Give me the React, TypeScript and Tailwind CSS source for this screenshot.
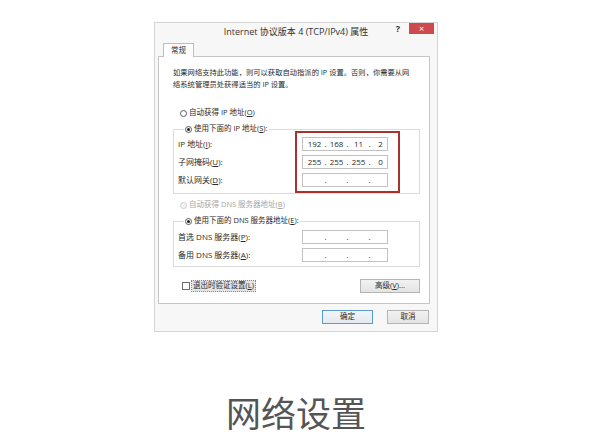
import type { ReactNode } from "react";

const UI = "font-['Open_Sans','Noto_Sans_CJK_SC',sans-serif]";

function Radio({ checked = false, disabled = false }: { checked?: boolean; disabled?: boolean }) {
  return (
    <span
      className={`flex h-[7px] w-[7px] shrink-0 items-center justify-center rounded-full border ${
        disabled ? "border-[#cfcfcf] bg-[#f2f2f2]" : "border-[#5a5a5a] bg-white"
      }`}
    >
      {checked && <span className="h-[3px] w-[3px] rounded-full bg-[#1e1e1e]" />}
    </span>
  );
}

function IpBox({ parts = ["", "", "", ""] }: { parts?: string[] }) {
  return (
    <div className="flex h-[14px] w-[86px] items-center border border-[#c2c2c2] bg-white pl-[2px] text-[8px] leading-none text-[#2a2a2a]">
      {parts.map((p, i) => (
        <div key={i} className="flex items-center">
          <span className="w-[19px] text-center">{p}</span>
          {i < 3 && <span className="w-[3px] text-center">.</span>}
        </div>
      ))}
    </div>
  );
}

function FieldRow({ label, parts }: { label: ReactNode; parts?: string[] }) {
  return (
    <div className="flex h-[14px] items-center">
      <span className="w-[124px] text-[8px] leading-none text-[#2a2a2a]">{label}</span>
      <IpBox parts={parts} />
    </div>
  );
}

function WinButton({ children, primary = false, width }: { children: ReactNode; primary?: boolean; width: string }) {
  return (
    <div
      className={`flex h-[14px] items-center justify-center border text-[7.5px] leading-none text-[#2a2a2a] ${width} ${
        primary
          ? "border-[#5b9bd0] bg-gradient-to-b from-[#f1f5f9] to-[#e3e9ef]"
          : "border-[#b4b4b4] bg-gradient-to-b from-[#f2f2f2] to-[#e4e4e4]"
      }`}
    >
      <span>{children}</span>
    </div>
  );
}

function Legend({ children, checked }: { children: ReactNode; checked?: boolean }) {
  return (
    <legend className="ml-[6px] px-[1px]">
      <span className="flex h-[14px] items-center gap-[2px] text-[7.5px] leading-none text-[#2a2a2a]">
        <Radio checked={checked} />
        <span>{children}</span>
      </span>
    </legend>
  );
}

export default function App() {
  return (
    <div className={`h-[444px] w-[592px] overflow-hidden bg-white ${UI}`}>
      {/* Internet Protocol v4 properties dialog */}
      <div className="ml-[154px] mt-[22px] flex h-[310px] w-[284px] flex-col border border-[#d4d4d4] bg-[#f7f7f7]">
        {/* title bar */}
        <div className="grid h-[20px] grid-cols-[1fr_auto_1fr] items-start">
          <div />
          <div className="pt-[3px] text-[9px] leading-[12px] text-[#333]">Internet 协议版本 4 (TCP/IPv4) 属性</div>
          <div className="flex items-start justify-end pr-[3px]">
            <span className="mr-[9px] mt-[1px] text-[9px] font-bold leading-[10px] text-[#333]">?</span>
            <div className="flex h-[11px] w-[25px] items-center justify-center bg-[#cd4a4f] text-[9px] leading-none text-white">
              ×
            </div>
          </div>
        </div>

        {/* tab strip */}
        <div className="flex pl-[8px]">
          <div className="relative z-10 -mb-px flex h-[14px] w-[31px] items-center justify-center border border-b-0 border-[#bdbdbd] bg-white text-[7.5px] leading-none text-[#2a2a2a]">
            常规
          </div>
        </div>

        {/* tab page */}
        <div className="ml-[3px] mr-[7px] flex h-[248px] flex-col border border-[#c6c6c6] bg-white pl-[14px] pr-[9px] pt-[9px]">
          <p className="text-[7.3px] leading-[12px] text-[#2a2a2a]">
            如果网络支持此功能，则可以获取自动指派的 IP 设置。否则，你需要从网
            <br />
            络系统管理员处获得适当的 IP 设置。
          </p>

          <div className="ml-[7px] mt-[16px] flex h-[14px] items-center gap-[2px] text-[7.5px] leading-none text-[#2a2a2a]">
            <Radio />
            <span>
              自动获得 IP 地址(<u>O</u>)
            </span>
          </div>

          <fieldset className="mt-[2px] border border-[#dcdcdc] pb-[6px] pl-[4px]">
            <Legend checked>
              使用下面的 IP 地址(<u>S</u>):
            </Legend>
            <div className="mt-px flex flex-col gap-[4px]">
              <FieldRow label={<>IP 地址(<u>I</u>):</>} parts={["192", "168", "11", "2"]} />
              <FieldRow label={<>子网掩码(<u>U</u>):</>} parts={["255", "255", "255", "0"]} />
              <FieldRow label={<>默认网关(<u>D</u>):</>} />
            </div>
          </fieldset>

          <div className="ml-[7px] mt-[4px] flex h-[14px] items-center gap-[2px] text-[7.5px] leading-none text-[#a6a6a6]">
            <Radio disabled />
            <span>
              自动获得 DNS 服务器地址(<u>B</u>)
            </span>
          </div>

          <fieldset className="mt-[2px] border border-[#dcdcdc] pb-[4px] pl-[4px]">
            <Legend checked>
              使用下面的 DNS 服务器地址(<u>E</u>):
            </Legend>
            <div className="mt-[2px] flex flex-col gap-[4px]">
              <FieldRow label={<>首选 DNS 服务器(<u>P</u>):</>} />
              <FieldRow label={<>备用 DNS 服务器(<u>A</u>):</>} />
            </div>
          </fieldset>

          <div className="mt-[12px] flex items-center justify-between">
            <div className="ml-[9px] flex items-center gap-[1px] text-[7.5px] leading-none text-[#2a2a2a]">
              <span className="h-[8px] w-[8px] border border-[#6b6b6b] bg-white" />
              <span className="border border-dotted border-[#8a8a8a] bg-[#e4e4e4] px-px py-[1px]">
                退出时验证设置(<u>L</u>)
              </span>
            </div>
            <WinButton width="w-[60px]">
              高级(<u>V</u>)...
            </WinButton>
          </div>
        </div>

        {/* dialog buttons */}
        <div className="mr-[8px] mt-[6px] flex justify-end gap-[14px]">
          <WinButton primary width="w-[51px]">
            确定
          </WinButton>
          <WinButton width="w-[42px]">取消</WinButton>
        </div>
      </div>

      {/* IP settings highlight */}
      <div className="pointer-events-none absolute left-[295px] top-[131px] h-[62px] w-[105px] border-2 border-[#a8322f]" />

      <div className="mt-[62px] text-center text-[35px] leading-[35px] text-[#555] font-['Noto_Sans_CJK_SC',sans-serif]">
        网络设置
      </div>
    </div>
  );
}
